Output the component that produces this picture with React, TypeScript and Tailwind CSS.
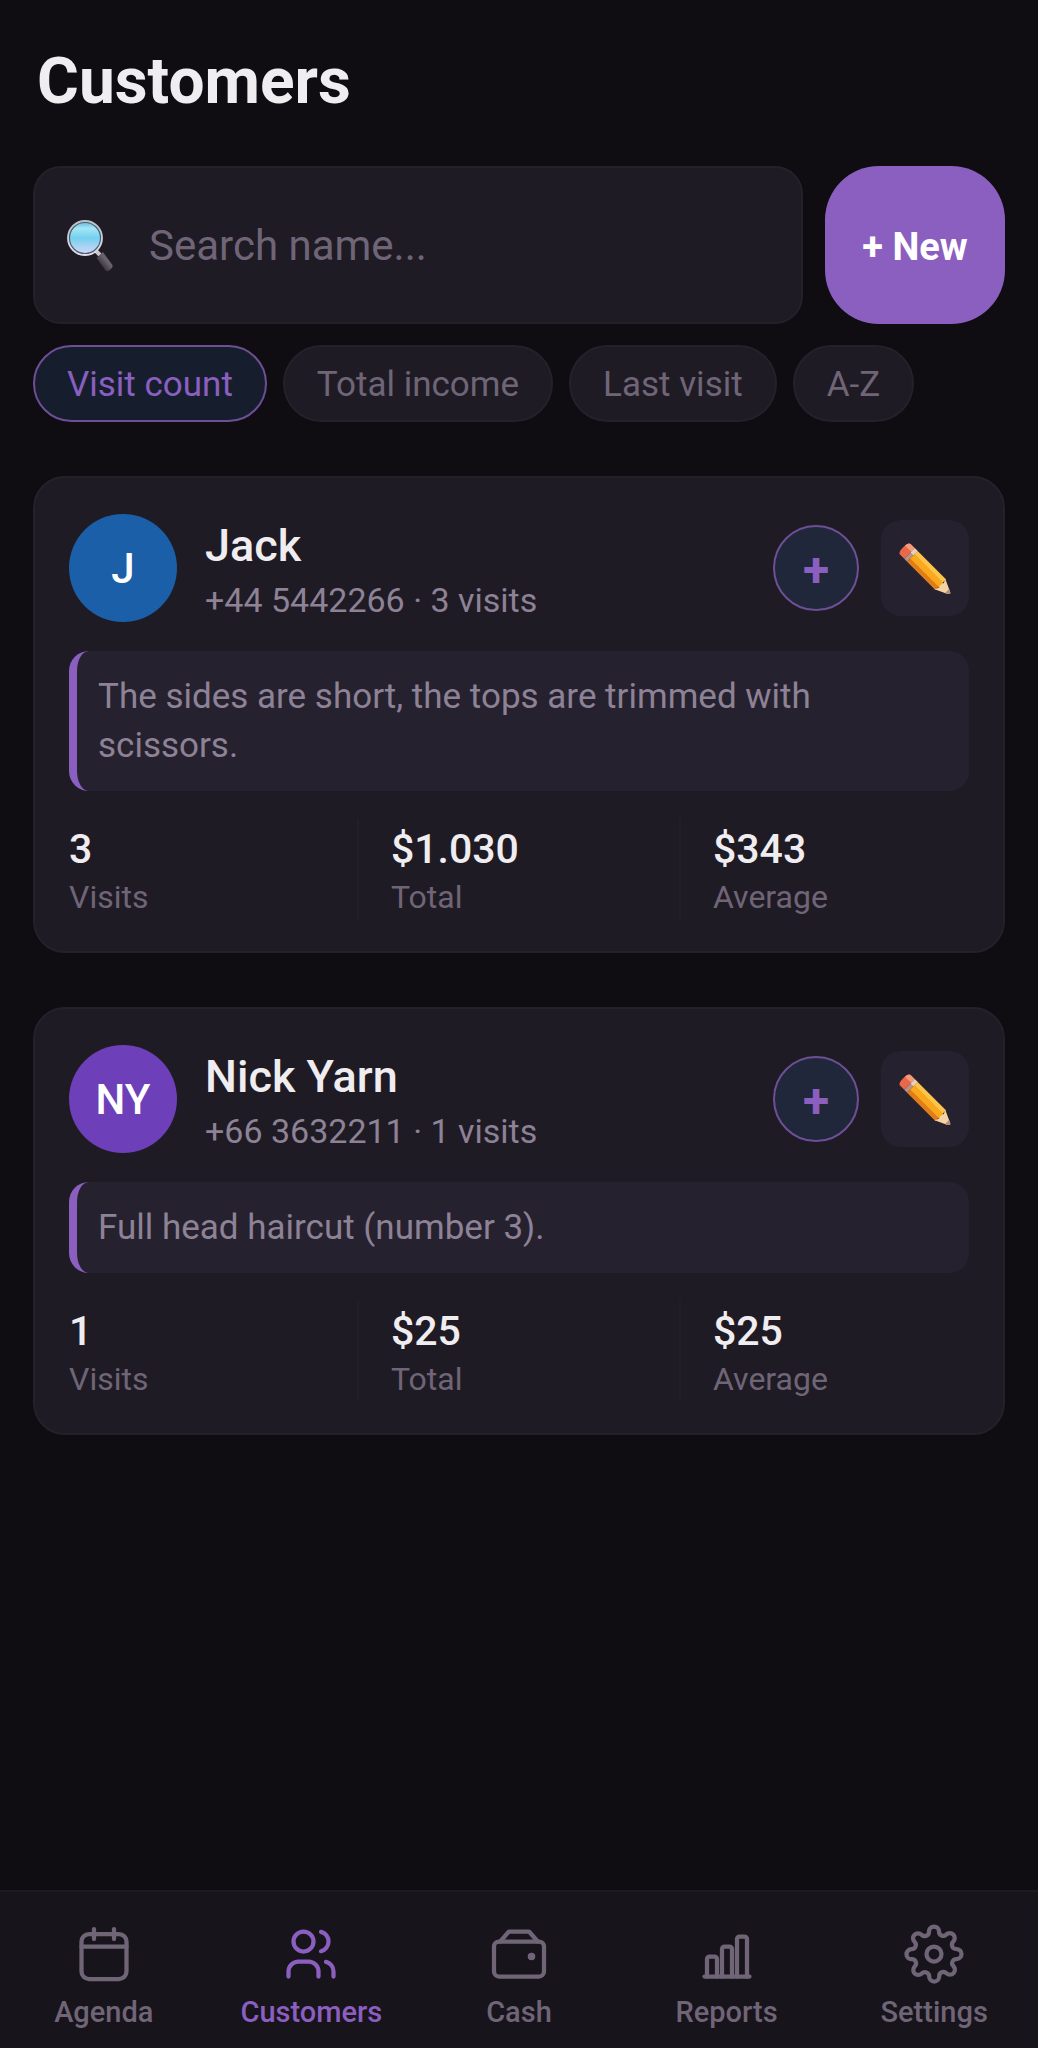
import React, { useState } from 'react';
import { clsx } from 'clsx';

type IconProps = { className?: string };

const LineIcon: React.FC<{ children: React.ReactNode }> = ({ children }) => (
  <svg
    viewBox="0 0 24 24"
    className="h-15 w-15"
    fill="none"
    stroke="currentColor"
    strokeWidth="1.7"
    strokeLinecap="round"
    strokeLinejoin="round"
    aria-hidden="true"
  >
    {children}
  </svg>
);

const CalendarIcon = () => (
  <LineIcon>
    <rect x="3" y="4" width="18" height="18" rx="3" />
    <path d="M8 2v4M16 2v4M3 9h18" />
  </LineIcon>
);

const UsersIcon = () => (
  <LineIcon>
    <circle cx="9" cy="7" r="4" />
    <path d="M3 21v-2a4 4 0 0 1 4-4h4a4 4 0 0 1 4 4v2" />
    <path d="M16 3.13a4 4 0 0 1 0 7.75M21 21v-2a4 4 0 0 0-3-3.85" />
  </LineIcon>
);

const WalletIcon = () => (
  <LineIcon>
    <rect x="2" y="7" width="20" height="14" rx="2" />
    <path d="M4.5 7l3.5-4h8l3.5 4" />
    <circle cx="17" cy="13" r="1.5" fill="currentColor" stroke="none" />
  </LineIcon>
);

const ChartIcon = () => (
  <LineIcon>
    <path d="M3 21h18" />
    <path d="M4 21v-7a1 1 0 0 1 1-1h2a1 1 0 0 1 1 1v7" />
    <path d="M10 21V10a1 1 0 0 1 1-1h2a1 1 0 0 1 1 1v11" />
    <path d="M16 21V6a1 1 0 0 1 1-1h2a1 1 0 0 1 1 1v15" />
  </LineIcon>
);

const GearIcon = () => (
  <LineIcon>
    <circle cx="12" cy="12" r="3" />
    <path d="M19.4 15a1.65 1.65 0 0 0 .33 1.82l.06.06a2 2 0 0 1 0 2.83 2 2 0 0 1-2.83 0l-.06-.06a1.65 1.65 0 0 0-1.82-.33 1.65 1.65 0 0 0-1 1.51V21a2 2 0 0 1-2 2 2 2 0 0 1-2-2v-.09A1.65 1.65 0 0 0 9 19.4a1.65 1.65 0 0 0-1.82.33l-.06.06a2 2 0 0 1-2.83 0 2 2 0 0 1 0-2.83l.06-.06a1.65 1.65 0 0 0 .33-1.82 1.65 1.65 0 0 0-1.51-1H3a2 2 0 0 1-2-2 2 2 0 0 1 2-2h.09A1.65 1.65 0 0 0 4.6 9a1.65 1.65 0 0 0-.33-1.82l-.06-.06a2 2 0 0 1 0-2.83 2 2 0 0 1 2.83 0l.06.06a1.65 1.65 0 0 0 1.82.33H9a1.65 1.65 0 0 0 1-1.51V3a2 2 0 0 1 2-2 2 2 0 0 1 2 2v.09a1.65 1.65 0 0 0 1 1.51 1.65 1.65 0 0 0 1.82-.33l.06-.06a2 2 0 0 1 2.83 0 2 2 0 0 1 0 2.83l-.06.06a1.65 1.65 0 0 0-.33 1.82V9a1.65 1.65 0 0 0 1.51 1H21a2 2 0 0 1 2 2 2 2 0 0 1-2 2h-.09a1.65 1.65 0 0 0-1.51 1z" />
  </LineIcon>
);

const MagnifierIcon: React.FC<IconProps> = ({ className }) => (
  <svg viewBox="0 0 48 52" className={className} aria-hidden="true">
    <defs>
      <linearGradient id="lens" x1="0" y1="0" x2="0" y2="1">
        <stop offset="0" stopColor="#5fb9dc" />
        <stop offset="0.2" stopColor="#a5e6f5" />
        <stop offset="0.5" stopColor="#74d0f0" />
        <stop offset="1" stopColor="#d9d6f6" />
      </linearGradient>
      <linearGradient id="rim" x1="0" y1="0" x2="0" y2="1">
        <stop offset="0" stopColor="#b9c0ca" />
        <stop offset="1" stopColor="#e3dfea" />
      </linearGradient>
      <linearGradient id="grip" x1="0" y1="1" x2="1" y2="0">
        <stop offset="0.3" stopColor="#3b373f" />
        <stop offset="0.6" stopColor="#6a656e" />
        <stop offset="0.9" stopColor="#403c44" />
      </linearGradient>
    </defs>
    <g transform="translate(-1 1)">
      <path d="M29 30l5 5" stroke="#c9c5cc" strokeWidth="4" />
      <path d="M30.5 38l6.5-6 9.5 13c1 2.5-4 7-6.5 6z" fill="url(#grip)" />
      <circle cx="19" cy="18" r="16.2" fill="url(#lens)" stroke="#46606f" strokeWidth="2.5" />
      <circle cx="19" cy="18" r="17" fill="none" stroke="url(#rim)" strokeWidth="1.8" />
    </g>
  </svg>
);

const PencilIcon: React.FC<IconProps> = ({ className }) => (
  <svg viewBox="0 0 52 52" className={className} aria-hidden="true">
    {/* drawn flat, then turned so that the tip points down right */}
    <g transform="translate(7 8) rotate(45)">
      <path d="M-1-7.5h6v15h-6c-2 0-3-3-3-7.5s1-7.5 3-7.5z" fill="#e8694a" />
      <path d="M-1-7.5h6v5h-9c.3-3 1.3-5 3-5z" fill="#f49a78" />
      <path d="M5-7.5h4v15H5z" fill="#b98f86" />
      <path d="M5-7.5h4v6H5z" fill="#e8cfc0" />
      <path d="M9-7.5h40v5H9z" fill="#fcc44a" />
      <path d="M9-3h41v6.5H9z" fill="#fba81c" />
      <path d="M9 3h40v4.5H9z" fill="#e07d1b" />
      <path d="M48-7.5L61-1.5c1.5 1 1.5 2 0 3L48 7.5l2-4-1-3.5 1-3.5z" fill="#f6d3a4" />
      <path d="M58-2.8l3 1.3c1.5 1 1.5 2 0 3l-3 1.3z" fill="#b0917c" />
    </g>
  </svg>
);

const sortOptions = ['Visit count', 'Total income', 'Last visit', 'A-Z'];

const customers = [
  {
    initials: 'J',
    name: 'Jack',
    phone: '+44 5442266',
    avatar: 'bg-[#1a5fa8]',
    note: 'The sides are short, the tops are trimmed with scissors.',
    visits: 3,
    total: '$1.030',
    average: '$343',
  },
  {
    initials: 'NY',
    name: 'Nick Yarn',
    phone: '+66 3632211',
    avatar: 'bg-[#6d3fb8]',
    note: 'Full head haircut (number 3).',
    visits: 1,
    total: '$25',
    average: '$25',
  },
];

const tabs = [
  { label: 'Agenda', icon: CalendarIcon },
  { label: 'Customers', icon: UsersIcon },
  { label: 'Cash', icon: WalletIcon },
  { label: 'Reports', icon: ChartIcon },
  { label: 'Settings', icon: GearIcon },
];

const CustomerCard: React.FC<{ customer: (typeof customers)[number] }> = ({ customer }) => {
  const stats = [
    { label: 'Visits', value: customer.visits },
    { label: 'Total', value: customer.total },
    { label: 'Average', value: customer.average },
  ];

  return (
    <article className="rounded-[32px] border-2 border-[#25212b] bg-[#1f1b25] px-[34px] pt-9 pb-8">
      <div className="flex items-center">
        <div
          className={clsx(
            'flex h-27 w-27 shrink-0 items-center justify-center rounded-full text-[42px] font-medium text-white',
            customer.avatar
          )}
        >
          {customer.initials}
        </div>
        <div className="ml-7 min-w-0 flex-1 pt-2">
          <h2 className="text-[45px] leading-12 font-medium text-[#f0edf0]">{customer.name}</h2>
          <p className="mt-2 text-[34px] leading-11 text-[#8d8296]">
            {customer.phone} · {customer.visits} visits
          </p>
        </div>
        <button
          type="button"
          aria-label={`Add visit for ${customer.name}`}
          className="flex h-[86px] w-[86px] items-center justify-center rounded-full border-2 border-[#6d4f96] bg-[#20273a] pt-1 text-[48px] leading-none font-bold text-[#8b5fbf]"
        >
          +
        </button>
        <button
          type="button"
          aria-label={`Edit ${customer.name}`}
          className="ml-[22px] flex h-24 w-22 items-center justify-center rounded-[20px] bg-[#26212e]"
        >
          <PencilIcon className="h-13 w-13" />
        </button>
      </div>

      <p className="mt-[29px] rounded-[20px] border-l-8 border-[#8b5fbf] bg-[#26212e] py-[21px] pr-7 pl-[21px] text-[35px] leading-[49px] text-[#8d8296]">
        {customer.note}
      </p>

      <dl className="mt-7 flex">
        {stats.map((s) => (
          <div
            key={s.label}
            className="flex flex-1 flex-col-reverse border-[#231f29] pt-1 not-last:mr-8 not-last:border-r-2 not-last:pr-8"
          >
            <dt className="text-[32px] leading-11 text-[#6f6577]">{s.label}</dt>
            <dd className="text-[41px] leading-13 font-medium text-[#f0edf0]">{s.value}</dd>
          </div>
        ))}
      </dl>
    </article>
  );
};

export default function App() {
  const [sortBy, setSortBy] = useState('Visit count');
  const [query, setQuery] = useState('');

  const visible = customers.filter((c) => c.name.toLowerCase().includes(query.toLowerCase()));

  return (
    <div className="flex min-h-screen flex-col bg-[#0f0c12] font-['Roboto',sans-serif]">
      <main className="flex-1 px-[33px] pt-[42px] pb-10">
        <h1 className="px-1 text-[64px] leading-20 font-bold text-[#f0edf0]">Customers</h1>

        <div className="mt-11 flex gap-[22px]">
          <label className="flex h-[158px] min-w-0 flex-1 items-center rounded-[28px] border-2 border-[#25212b] bg-[#1f1b25] px-8">
            <MagnifierIcon className="h-13 w-12 shrink-0 overflow-visible" />
            <input
              type="text"
              aria-label="Search name"
              placeholder="Search name..."
              value={query}
              onChange={(e) => setQuery(e.target.value)}
              className="ml-[34px] min-w-0 flex-1 bg-transparent text-[42px] text-[#f0edf0] outline-none placeholder:text-[#6f6577]"
            />
          </label>
          <button type="button" className="w-45 shrink-0 rounded-[54px] bg-[#8b5fbf] pt-1 text-[38px] font-bold text-white">
            + New
          </button>
        </div>

        {/* Sort chips */}
        <div className="mt-[21px] flex gap-4">
          {sortOptions.map((option) => (
            <button
              key={option}
              type="button"
              aria-pressed={sortBy === option}
              onClick={() => setSortBy(option)}
              className={clsx(
                'h-[77px] rounded-full border-2 px-8 pt-1 text-[35px] whitespace-nowrap',
                sortBy === option
                  ? 'border-[#6d4f96] bg-[#161e2e] text-[#8b5fbf]'
                  : 'border-[#25212b] bg-[#1f1b25] text-[#6f6577]'
              )}
            >
              {option}
            </button>
          ))}
        </div>

        <section className="mt-[54px] flex flex-col gap-[54px]">
          {visible.map((c) => (
            <CustomerCard key={c.name} customer={c} />
          ))}
        </section>
      </main>

      {/* Bottom tab bar */}
      <nav className="sticky bottom-0 flex border-t-2 border-[#1e1a22] bg-[#18141b] pt-8 pb-4">
        {tabs.map(({ label, icon: Icon }) => {
          const active = label === 'Customers';
          return (
            <a
              key={label}
              href={`#${label.toLowerCase()}`}
              aria-current={active ? 'page' : undefined}
              className={clsx(
                'flex flex-1 basis-0 flex-col items-center gap-2 text-[29px] leading-10 font-medium',
                active ? 'text-[#8b5fbf]' : 'text-[#6f6577]'
              )}
            >
              <Icon />
              {label}
            </a>
          );
        })}
      </nav>
    </div>
  );
}
